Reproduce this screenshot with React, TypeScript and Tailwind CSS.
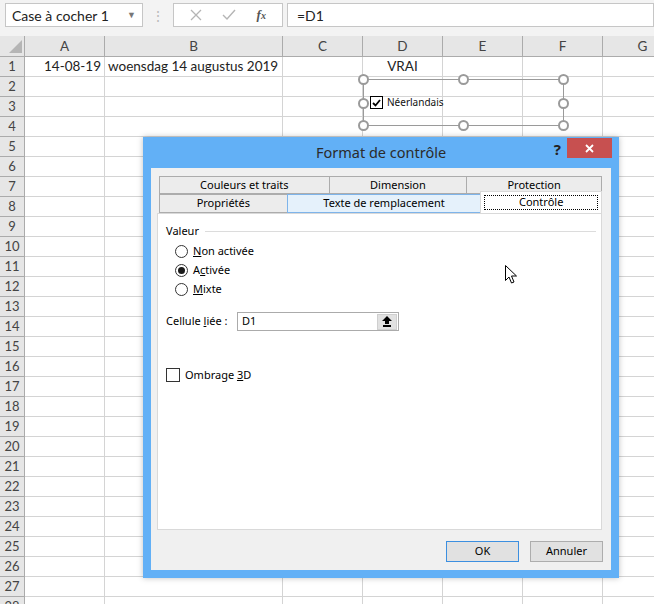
import React from "react"

const cols = [
  { l: "A", w: 80 },
  { l: "B", w: 178 },
  { l: "C", w: 80 },
  { l: "D", w: 80 },
  { l: "E", w: 80 },
  { l: "F", w: 80 },
  { l: "G", w: 80 },
]

const rows = Array.from({ length: 28 }, (_, i) => i + 1)

function Handle({ x, y }: { x: number; y: number }) {
  return (
    <div
      className="absolute w-[11px] h-[11px] rounded-full bg-white border-2 border-[#9a9a9a]"
      style={{ left: x - 5, top: y - 5 }}
    />
  )
}

function Radio({ checked, children }: { checked?: boolean; children: React.ReactNode }) {
  return (
    <div className="flex items-center h-[19px]">
      <div className="w-[13px] h-[13px] rounded-full border border-[#333] bg-white flex items-center justify-center ml-[9px]">
        {checked && <div className="w-[7px] h-[7px] rounded-full bg-[#1a1a1a]" />}
      </div>
      <span className="ml-[5px]">{children}</span>
    </div>
  )
}

function Tab({ w, label, tone }: { w: number; label: string; tone?: "hover" }) {
  return (
    <div
      className={
        tone === "hover"
          ? "h-full flex items-center justify-center border border-[#7eb4ea] bg-[#e5f1fb] -ml-px"
          : "h-full flex items-center justify-center border border-[#acacac] bg-[#ececec] -ml-px first:ml-0"
      }
      style={{ width: w }}
    >
      {label}
    </div>
  )
}

export default function App() {
  return (
    <div className="relative w-[654px] h-[604px] overflow-hidden bg-white [font-family:Lato,sans-serif] text-[13.5px] text-[#222]">
      {/* formula bar */}
      <div className="h-[36px] bg-[#f3f3f3] flex items-start pt-[3px] pl-[5px]">
        <div className="w-[138px] h-[24px] bg-white border border-[#c6c6c6] flex items-center justify-between px-[6px] text-[14px]">
          <span>Case à cocher 1</span>
          <span className="text-[9px] text-[#777]">▼</span>
        </div>
        <div className="w-[30px] h-[24px] flex items-center justify-center text-[#bbb] text-[14px]">⋮</div>
        <div className="w-[110px] h-[24px] bg-white border border-[#c6c6c6] flex items-center justify-around px-[6px] text-[#b5b5b5]">
          <svg width="12" height="12" viewBox="0 0 12 12">
            <path d="M1 1 L11 11 M11 1 L1 11" stroke="#b5b5b5" strokeWidth="1.3" />
          </svg>
          <svg width="14" height="12" viewBox="0 0 14 12">
            <path d="M1 6 L5 10 L13 1" stroke="#b5b5b5" strokeWidth="1.4" fill="none" />
          </svg>
          <span className="[font-family:'Liberation_Serif',serif] italic font-bold text-[13px] text-[#555]">
            f<span className="text-[10px]">x</span>
          </span>
        </div>
        <div className="ml-[4px] flex-1 h-[24px] bg-white border border-[#c6c6c6] flex items-center pl-[9px] text-[14px]">=D1</div>
      </div>

      {/* column headers */}
      <div className="flex h-[21px] bg-[#e6e6e6] border-b border-[#ababab]">
        <div className="w-[25px] shrink-0 border-r border-[#ababab] relative">
          <svg className="absolute left-[9px] top-[4px]" width="13" height="13" viewBox="0 0 13 13">
            <path d="M13 0 L13 13 L0 13 Z" fill="#b5b5b5" />
          </svg>
        </div>
        {cols.map((c) => (
          <div
            key={c.l}
            className="shrink-0 border-r border-[#ababab] flex items-center justify-center text-[#444]"
            style={{ width: c.w }}
          >
            {c.l}
          </div>
        ))}
      </div>

      {/* rows */}
      {rows.map((r) => (
        <div key={r} className="flex h-[20px]">
          <div className="w-[25px] shrink-0 bg-[#e6e6e6] border-r border-b border-[#ababab] flex items-center justify-center text-[#444] text-[13px]">
            {r}
          </div>
          {cols.map((c) => (
            <div
              key={c.l}
              className={
                "shrink-0 border-r border-b border-[#d4d4d4] flex items-center px-[3px] whitespace-nowrap " +
                (c.l === "A" ? "justify-end" : c.l === "D" ? "justify-center" : "justify-start")
              }
              style={{ width: c.w }}
            >
              {r === 1 && c.l === "A" && "14-08-19"}
              {r === 1 && c.l === "B" && "woensdag 14 augustus 2019"}
              {r === 1 && c.l === "D" && "VRAI"}
            </div>
          ))}
        </div>
      ))}

      {/* selected checkbox control */}
      <div className="absolute left-[363px] top-[79px] w-[201px] h-[47px] border border-[#9a9a9a]">
        <div className="flex items-center h-full pl-[6px] gap-[4px] [font-family:'Noto_Sans',sans-serif] text-[10px] text-[#111]">
          <div className="w-[13px] h-[13px] border border-black bg-white flex items-center justify-center">
            <svg width="9" height="8" viewBox="0 0 9 8">
              <path d="M1 4 L3.5 6.5 L8 1" stroke="black" strokeWidth="1.8" fill="none" />
            </svg>
          </div>
          <span>Néerlandais</span>
        </div>
      </div>
      <Handle x={363} y={79} />
      <Handle x={463} y={79} />
      <Handle x={563} y={79} />
      <Handle x={363} y={103} />
      <Handle x={563} y={103} />
      <Handle x={363} y={125} />
      <Handle x={463} y={125} />
      <Handle x={563} y={125} />

      {/* dialog */}
      <div className="absolute left-[143px] top-[137px] w-[476px] h-[441px] bg-[#62b0f6] px-[8px] pb-[8px] flex flex-col shadow-[0_0_6px_rgba(0,0,0,0.25)] [font-family:'Noto_Sans',sans-serif] text-[11px] text-black">
        <div className="h-[31px] shrink-0 relative flex items-center justify-center">
          <span className="text-[14.5px] text-[#2b2b2b] font-normal">Format de contrôle</span>
          <span className="absolute right-[50px] top-[1px] text-[15px] font-bold text-[#222]">?</span>
          <div className="absolute right-[-1px] top-[1px] w-[45px] h-[20px] bg-[#c75050] flex items-center justify-center">
            <svg width="9" height="9" viewBox="0 0 9 9">
              <path d="M1 1 L8 8 M8 1 L1 8" stroke="white" strokeWidth="1.8" />
            </svg>
          </div>
        </div>

        <div className="flex-1 bg-[#f0f0f0] pt-[8px] pl-[6px] flex flex-col">
          {/* tabs */}
          <div className="ml-[2px] w-[443px] flex flex-col">
            <div className="flex h-[18px]">
              <Tab w={171} label="Couleurs et traits" />
              <Tab w={139} label="Dimension" />
              <Tab w={136} label="Protection" />
            </div>
            <div className="flex h-[19px] items-end">
              <Tab w={129} label="Propriétés" />
              <Tab w={195} label="Texte de remplacement" tone="hover" />
              <div className="-ml-px w-[122px] h-[22px] -mt-[3px] bg-white border border-[#d9d9d9] border-b-0 relative z-10 flex items-start justify-center pt-[3px]">
                <div className="w-[114px] h-[15px] border border-dotted border-black flex items-center justify-center">
                  Contrôle
                </div>
              </div>
            </div>
          </div>

          {/* panel */}
          <div className="w-[445px] h-[317px] bg-white border border-[#d9d9d9] flex flex-col pl-[8px] pr-[5px]">
            <div className="flex items-center mt-[9px] h-[16px]">
              <span>Valeur</span>
              <div className="flex-1 h-px bg-[#dcdcdc] ml-[6px]" />
            </div>
            <div className="mt-[3px] flex flex-col">
              <Radio>
                <u>N</u>on activée
              </Radio>
              <Radio checked>
                A<u>c</u>tivée
              </Radio>
              <Radio>
                <u>M</u>ixte
              </Radio>
            </div>
            <div className="flex items-center mt-[13px]">
              <span className="w-[71px]">
                Cellule <u>l</u>iée :
              </span>
              <div className="w-[162px] h-[19px] border border-[#ababab] flex items-center justify-between pl-[4px] pr-[1px]">
                <span>D1</span>
                <div className="w-[20px] h-[16px] bg-[#e1e1e1] border border-[#cfcfcf] flex items-center justify-center">
                  <svg width="10" height="11" viewBox="0 0 10 11">
                    <path d="M5 0 L10 5 L7 5 L7 8 L3 8 L3 5 L0 5 Z" fill="black" />
                    <rect x="1" y="9" width="8" height="2" fill="black" />
                  </svg>
                </div>
              </div>
            </div>
            <div className="flex items-center mt-[36px]">
              <div className="w-[14px] h-[14px] border border-[#333] bg-white" />
              <span className="ml-[5px]">
                Ombrage <u>3</u>D
              </span>
            </div>
          </div>

          {/* buttons */}
          <div className="flex justify-end gap-[11px] mt-[11px] pr-[8px]">
            <div className="w-[73px] h-[21px] bg-[#e1e1e1] border border-[#3c8fe0] flex items-center justify-center">OK</div>
            <div className="w-[73px] h-[21px] bg-[#e1e1e1] border border-[#adadad] flex items-center justify-center">Annuler</div>
          </div>
        </div>
      </div>

      {/* mouse cursor */}
      <svg className="absolute left-[505px] top-[265px]" width="13" height="20" viewBox="0 0 13 20">
        <path d="M0.5 0.5 L0.5 15.5 L4 12 L6.5 18 L9 17 L6.5 11 L11.5 11 Z" fill="white" stroke="black" strokeWidth="1" />
      </svg>
    </div>
  )
}
